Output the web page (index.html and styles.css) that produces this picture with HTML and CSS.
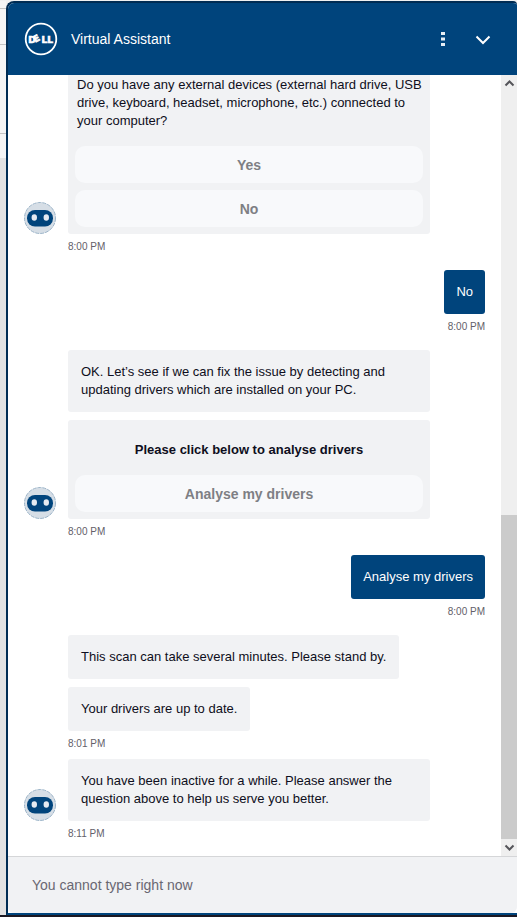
FILE: index.html
```html
<!DOCTYPE html>
<html lang="en">
<head>
    <meta charset="UTF-8">
    <meta name="viewport" content="width=device-width, initial-scale=1.0">
    <title>Virtual Assistant</title>
    <link rel="stylesheet" href="styles.css">
</head>
<body>
    <svg class="defs" aria-hidden="true">
        <symbol id="bot" viewBox="0 0 32 32">
            <circle cx="16" cy="16" r="15.5" fill="#d6dee6" stroke="#9db5c9" stroke-dasharray="4 1"/>
            <rect x="3" y="8" width="26" height="16.500" rx="8" fill="#00447c"/>
            <ellipse cx="10.300" cy="15.500" rx="2.700" ry="3.200" fill="#e4eaf1"/>
            <ellipse cx="22.300" cy="15.500" rx="2.700" ry="3.200" fill="#e4eaf1"/>
        </symbol>
    </svg>

    <div class="page-edge">
        <div class="edge-row edge-first"></div>
        <div class="edge-row edge-second"></div>
        <div class="edge-row edge-third"></div>
        <div class="edge-row edge-fourth"></div>
    </div>

    <main class="chat">
        <header class="chat-header">
            <svg class="logo" viewBox="0 0 34 34" role="img" aria-label="Dell">
                <circle cx="17" cy="17" r="15.3" fill="none" stroke="#fff" stroke-width="1.8"/>
                <text class="logo-text" x="4.200 11.200 17.600 23.300" y="20.500 20.800 20.500 20.500" rotate="0 -30 0 0">DELL</text>
            </svg>
            <h1 class="title">Virtual Assistant</h1>
            <button class="icon-btn" type="button" aria-label="Options">
                <svg width="16" height="16" viewBox="0 0 16 16" fill="#e6eef5">
                    <rect x="6" y="1" width="4" height="3"/>
                    <rect x="6" y="6.500" width="4" height="3"/>
                    <rect x="6" y="12" width="4" height="3"/>
                </svg>
            </button>
            <button class="icon-btn" type="button" aria-label="Minimise">
                <svg width="16" height="16" viewBox="0 0 16 16" fill="none" stroke="#fff" stroke-width="2">
                    <path d="M1.500 5.500 8 12l6.500-6.500"/>
                </svg>
            </button>
        </header>

        <div class="chat-body">
            <div class="messages">
                <section class="group">
                    <div class="row">
                        <svg class="avatar"><use href="#bot"/></svg>
                        <div class="stack">
                            <div class="card">
                                <p class="card-text">Do you have any external devices (external hard drive, USB drive, keyboard, headset, microphone, etc.) connected to your computer?</p>
                                <button class="choice" type="button" disabled>Yes</button>
                                <button class="choice" type="button" disabled>No</button>
                            </div>
                        </div>
                    </div>
                    <time class="time">8:00 PM</time>
                </section>

                <section class="group mine">
                    <p class="bubble">No</p>
                    <time class="time">8:00 PM</time>
                </section>

                <section class="group">
                    <div class="row">
                        <svg class="avatar"><use href="#bot"/></svg>
                        <div class="stack">
                            <p class="bubble">OK. Let’s see if we can fix the issue by detecting and updating drivers which are installed on your PC.</p>
                            <div class="card">
                                <p class="card-title">Please click below to analyse drivers</p>
                                <button class="choice" type="button" disabled>Analyse my drivers</button>
                            </div>
                        </div>
                    </div>
                    <time class="time">8:00 PM</time>
                </section>

                <section class="group mine">
                    <p class="bubble">Analyse my drivers</p>
                    <time class="time">8:00 PM</time>
                </section>

                <section class="group">
                    <div class="row">
                        <div class="avatar"></div>
                        <div class="stack">
                            <p class="bubble">This scan can take several minutes. Please stand by.</p>
                            <p class="bubble">Your drivers are up to date.</p>
                        </div>
                    </div>
                    <time class="time">8:01 PM</time>
                </section>

                <section class="group follow">
                    <div class="row">
                        <svg class="avatar"><use href="#bot"/></svg>
                        <div class="stack">
                            <p class="bubble">You have been inactive for a while. Please answer the question above to help us serve you better.</p>
                        </div>
                    </div>
                    <time class="time">8:11 PM</time>
                </section>
            </div>

            <div class="scrollbar" aria-hidden="true">
                <svg class="arrow" viewBox="0 0 16 17"><path d="M4.500 10.500 8.500 6.500l4 4"/></svg>
                <div class="track"><div class="thumb"></div></div>
                <svg class="arrow" viewBox="0 0 16 17"><path d="M4.500 6.500l4 4 4-4"/></svg>
            </div>
        </div>

        <footer class="chat-footer">
            <input class="type-box" type="text" aria-label="Message" placeholder="You cannot type right now" disabled>
        </footer>
    </main>
</body>
</html>
```

FILE: styles.css
```css
*{
    box-sizing: border-box;
}
body{
    margin: 0;
    height: 100vh;
    padding: 1px 0 2px;
    display: flex;
    overflow: hidden;
    background: linear-gradient(#f0f0f0 50%, #1b1822 50%);
    font-family: Arial, "Liberation Sans", sans-serif;
    font-size: 13px;
    line-height: 18px;
    color: #0e0e20;
}
p, h1{
    margin: 0;
}
.defs{
    position: absolute;
    width: 0;
    height: 0;
}

/* strip of the page behind the chat window */
.page-edge{
    width: 6px;
    display: flex;
    flex-direction: column;
    background: #e2e2e2;
}
.edge-row{
    background: #f5f5f5;
    border-bottom: 1px solid #c4c4c4;
}
.edge-first{
    height: 8px;
}
.edge-second{
    height: 36px;
}
.edge-third{
    height: 89px;
}
.edge-fourth{
    height: 24px;
    border: 0;
}

.chat{
    flex: 1;
    min-width: 0;
    display: flex;
    flex-direction: column;
    background: white;
    border: 2px solid #002c53;
    border-right: 0;
    border-bottom-color: #00447c;
    border-radius: 8px 4px 0 0;
    overflow: hidden;
}
.chat-header{
    flex: none;
    height: 72px;
    padding: 0 18px 0 16px;
    display: flex;
    align-items: center;
    background: #00447c;
    color: white;
}
.logo{
    width: 34px;
    height: 34px;
}
.logo-text{
    font-family: "DejaVu Sans", sans-serif;
    font-size: 9px;
    font-weight: bold;
    fill: white;
    stroke: white;
    stroke-width: 0.7px;
}
.title{
    flex: 1;
    margin-left: 13px;
    font-size: 14px;
    font-weight: normal;
}
.icon-btn{
    width: 32px;
    height: 32px;
    padding: 8px;
    border: 0;
    background: none;
}
.icon-btn svg{
    display: block;
}
.icon-btn + .icon-btn{
    margin: 0 0 0 8px;
}

.chat-body{
    flex: 1;
    min-height: 0;
    display: flex;
}
.messages{
    flex: 1;
    min-width: 0;
    padding: 0 16px 14px;
    display: flex;
    flex-direction: column;
    justify-content: flex-end;
    overflow: hidden;
}
.group{
    flex: none;
    margin-top: 15px;
}
.follow{
    margin-top: 7px;
}
.row{
    display: flex;
    align-items: flex-end;
    gap: 12px;
}
.avatar{
    flex: none;
    width: 32px;
    height: 32px;
}
.stack{
    flex: 1;
    max-width: 362px;
    display: flex;
    flex-direction: column;
    align-items: flex-start;
    gap: 8px;
}
.bubble{
    padding: 13px;
    border-radius: 3px;
    background: #f1f2f4;
}
.card{
    width: 100%;
    padding: 7px;
    display: flex;
    flex-direction: column;
    gap: 7px;
    border-radius: 3px;
    background: #f1f2f4;
}
.card-text{
    padding: 0 0 9px 2px;
}
.card-title{
    padding: 14px 0 9px;
    font-weight: bold;
    text-align: center;
}
.choice{
    height: 37px;
    border: 0;
    border-radius: 10px;
    background: #f8f9fb;
    color: #7e7f84;
    font-family: inherit;
    font-size: 14px;
    font-weight: bold;
}
.time{
    display: block;
    margin: 5px 0 0 44px;
    font-size: 10px;
    line-height: 16px;
    color: #636069;
}
.mine{
    display: flex;
    flex-direction: column;
    align-items: flex-end;
}
.mine .bubble{
    padding: 13px 12px;
    background: #00447c;
    color: white;
}

.scrollbar{
    flex: none;
    width: 16px;
    display: flex;
    flex-direction: column;
    background: #efefef;
}
.arrow{
    width: 16px;
    height: 17px;
    fill: none;
    stroke: #55555a;
    stroke-width: 2;
}
.track{
    flex: 1;
    display: flex;
    align-items: flex-end;
}
.thumb{
    width: 100%;
    height: 324px;
    background: #cbcbcb;
}

.chat-footer{
    flex: none;
    height: 57px;
    border-top: 1px solid #d5d6d8;
    border-radius: 0 0 6px 6px;
    background: #f1f2f4;
}
.type-box{
    width: 100%;
    height: 56px;
    padding: 0 24px;
    border: 0;
    background: none;
    font-family: inherit;
    font-size: 14px;
}
.type-box::placeholder{
    color: #696772;
    opacity: 1;
}
```
